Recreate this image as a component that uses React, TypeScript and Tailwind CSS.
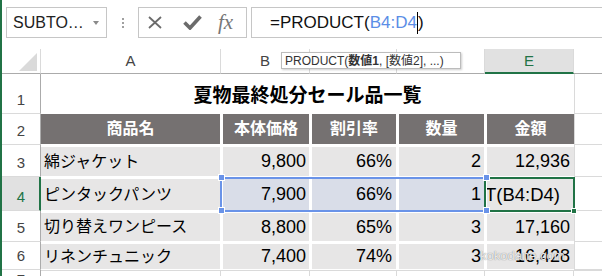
import type { ReactNode } from 'react';

type Item = { no: number; name: string; price: string; rate: string; qty: string; amount: string | null };

const items: Item[] = [
  { no: 3, name: '綿ジャケット', price: '9,800', rate: '66%', qty: '2', amount: '12,936' },
  { no: 4, name: 'ピンタックパンツ', price: '7,900', rate: '66%', qty: '1', amount: null },
  { no: 5, name: '切り替えワンピース', price: '8,800', rate: '65%', qty: '3', amount: '17,160' },
  { no: 6, name: 'リネンチュニック', price: '7,400', rate: '74%', qty: '3', amount: '16,428' },
];

const headers = ['商品名', '本体価格', '割引率', '数量', '金額'];

const FormulaBar = () => (
  <div className="flex h-[49px] items-start pt-[7px]">
    <div className="ml-[4px] flex h-[31px] w-[101px] items-center justify-between border border-[#c6c6c6] pl-[6px] pr-[7px] text-[16px] text-[#222]">
      <span>SUBTO…</span>
      <span className="h-0 w-0 border-x-[3.5px] border-t-[4px] border-x-transparent border-t-[#8a8a8a]" />
    </div>
    <div className="flex h-[31px] w-[31px] flex-col items-center justify-center gap-[2px]">
      <span className="h-[2px] w-[2px] bg-[#a0a0a0]" />
      <span className="h-[2px] w-[2px] bg-[#a0a0a0]" />
      <span className="h-[2px] w-[2px] bg-[#a0a0a0]" />
    </div>
    <div className="flex h-[31px] w-[109px] items-center border border-[#c6c6c6] pl-[9px]">
      <svg width="14" height="13" viewBox="0 0 14 13">
        <path d="M1 1 L13 12 M13 1 L1 12" stroke="#6b6b6b" strokeWidth="1.8" fill="none" />
      </svg>
      <svg className="ml-[21px]" width="19" height="15" viewBox="0 0 19 15">
        <path d="M1.5 7.5 L7 13 L17.5 1.5" stroke="#6b6b6b" strokeWidth="3.6" fill="none" />
      </svg>
      <span className="ml-[16px] font-['Liberation_Serif',serif] text-[21px] italic leading-none text-[#777]">fx</span>
    </div>
    <div className="ml-[4px] flex h-[31px] flex-1 items-center border border-r-0 border-[#c6c6c6] pl-[18px] text-[17px] text-[#111]">
      <span>=PRODUCT(</span>
      <span className="text-[#5b8ee6]">B4:D4</span>
      <span className="h-[22px] w-px bg-black" />
      <span>)</span>
    </div>
  </div>
);

const RowHead = ({ n, active }: { n: number; active?: boolean }) =>
  active ? (
    <div className="flex items-end justify-center border-b border-r-2 border-b-[#dadada] border-r-[#217346] bg-[#e1e1e1] pb-[4px] pl-px text-[15px] leading-[18px] text-[#217346]">
      {n}
    </div>
  ) : (
    <div className="flex items-end justify-center border-b border-r border-b-[#dadada] border-r-[#ababab] pb-[4px] text-[15px] leading-[18px] text-[#444]">
      {n}
    </div>
  );

const TCell = ({
  row,
  col,
  fill,
  className,
  children,
}: {
  row: number;
  col: number;
  fill: string;
  className?: string;
  children?: ReactNode;
}) => (
  <div className={`bg-white pb-px ${row === 2 ? 'pt-0' : 'pt-[2px]'} ${col === 0 ? 'pl-0' : 'pl-[2px]'} ${col === 4 ? 'pr-0' : 'pr-px'}`}>
    <div className={`flex h-full items-center ${fill} ${className ?? ''}`}>{children}</div>
  </div>
);

const Blank = () => <div className="border-b border-l border-[#dadada]" />;

const Sheet = () => (
  <div className="relative grid h-[227px] grid-cols-[39px_180px_89px_87px_88px_89px_1fr] grid-rows-[25px_40px_31px_32px_34px_31px_28px_1fr]">
    {/* column headers */}
    <div className="flex items-end justify-end border-b border-r border-b-[#ababab] border-r-[#dadada] pb-[2px] pr-[3px]">
      <svg width="18" height="18" viewBox="0 0 18 18">
        <polygon points="18,0 18,18 0,18" fill="#dadada" />
      </svg>
    </div>
    {['A', 'B', 'C', 'D'].map((c) => (
      <div key={c} className="flex items-center justify-center border-b border-r border-b-[#ababab] border-r-[#dadada] text-[15px] text-[#444]">
        {c}
      </div>
    ))}
    <div className="flex items-center justify-center border-b-2 border-r border-b-[#217346] border-r-[#dadada] bg-[#e1e1e1] pt-[2px] text-[15px] text-[#217346]">
      E
    </div>
    <div className="border-b border-b-[#ababab]" />

    {/* row 1 */}
    <RowHead n={1} />
    <div className="col-span-5 flex items-center justify-center pt-[4px] text-[19px] font-bold text-black">
      夏物最終処分セール品一覧
    </div>
    <Blank />

    {/* row 2 */}
    <RowHead n={2} />
    {headers.map((h, i) => (
      <TCell key={h} row={2} col={i} fill="bg-[#757171]" className="justify-center text-[16px] font-bold text-white">
        {h}
      </TCell>
    ))}
    <Blank />

    {/* data rows */}
    {items.map((it) => {
      const sel = it.no === 4;
      const mid = sel ? 'bg-[#d9dde8]' : 'bg-[#e7e6e6]';
      return [
        <RowHead key={`h${it.no}`} n={it.no} active={sel} />,
        <TCell key={`a${it.no}`} row={it.no} col={0} fill="bg-[#e7e6e6]" className="pl-[3px] text-[16px] text-black">
          {it.name}
        </TCell>,
        <TCell key={`b${it.no}`} row={it.no} col={1} fill={mid} className="justify-end pr-[3px] text-[18px] text-black">
          {it.price}
        </TCell>,
        <TCell key={`c${it.no}`} row={it.no} col={2} fill={mid} className="justify-end pr-[4px] text-[18px] text-black">
          {it.rate}
        </TCell>,
        <TCell key={`d${it.no}`} row={it.no} col={3} fill={mid} className="justify-end pr-[3px] text-[18px] text-black">
          {it.qty}
        </TCell>,
        <TCell
          key={`e${it.no}`}
          row={it.no}
          col={4}
          fill="bg-[#e7e6e6]"
          className="justify-end overflow-hidden whitespace-nowrap pr-[4px] text-[18px] text-black"
        >
          {it.amount ?? <span className="mr-[10px] text-[18.5px]">=PRODUCT(B4:D4)</span>}
        </TCell>,
        <Blank key={`f${it.no}`} />,
      ];
    })}

    {/* row 7 */}
    <div className="flex items-start justify-center border-r border-r-[#ababab] pt-px text-[15px] leading-[18px] text-[#444]">7</div>
    {[0, 1, 2, 3, 4].map((i) => (
      <div key={i} className="border-r border-t border-[#dadada]" />
    ))}
    <div className="border-t border-[#dadada]" />

    {/* overlays */}
    <div className="absolute left-[279px] top-[3px] flex h-[17px] w-[180px] items-center whitespace-nowrap border border-[#bcbcbc] bg-white px-[3px] text-[12px] text-[#333] shadow-[1px_1px_2px_rgba(0,0,0,0.2)]">
      PRODUCT(<b>数値1</b>, [数値2], ...)
    </div>
    <div className="absolute left-[218px] top-[128px] h-[35px] w-[266px] border-2 border-[#6a93e8]" />
    <div className="absolute left-[482px] top-[128px] h-[35px] w-[91px] border-2 border-[#217346]" />
    <div className="absolute left-[216px] top-[125px] h-[7px] w-[7px] border border-white bg-[#6a93e8]" />
    <div className="absolute left-[216px] top-[158px] h-[7px] w-[7px] border border-white bg-[#6a93e8]" />
    <div className="absolute left-[481px] top-[125px] h-[7px] w-[7px] border border-white bg-[#6a93e8]" />
    <div className="absolute left-[481px] top-[158px] h-[7px] w-[7px] border border-white bg-[#6a93e8]" />
    <div className="absolute left-[569px] top-[159px] h-[6px] w-[6px] border border-white bg-[#217346]" />
    <div className="absolute left-[478px] top-[199px] text-[13px] leading-[16px] text-[rgba(255,255,255,0.85)] [text-shadow:0_0_1px_#666]">
      kokodane.com
    </div>
  </div>
);

export default function App() {
  return (
    <div className="relative h-[276px] w-[602px] overflow-hidden border-l-2 border-[#217346] bg-white font-['Liberation_Sans','Noto_Sans_CJK_JP',sans-serif]">
      <FormulaBar />
      <Sheet />
    </div>
  );
}
